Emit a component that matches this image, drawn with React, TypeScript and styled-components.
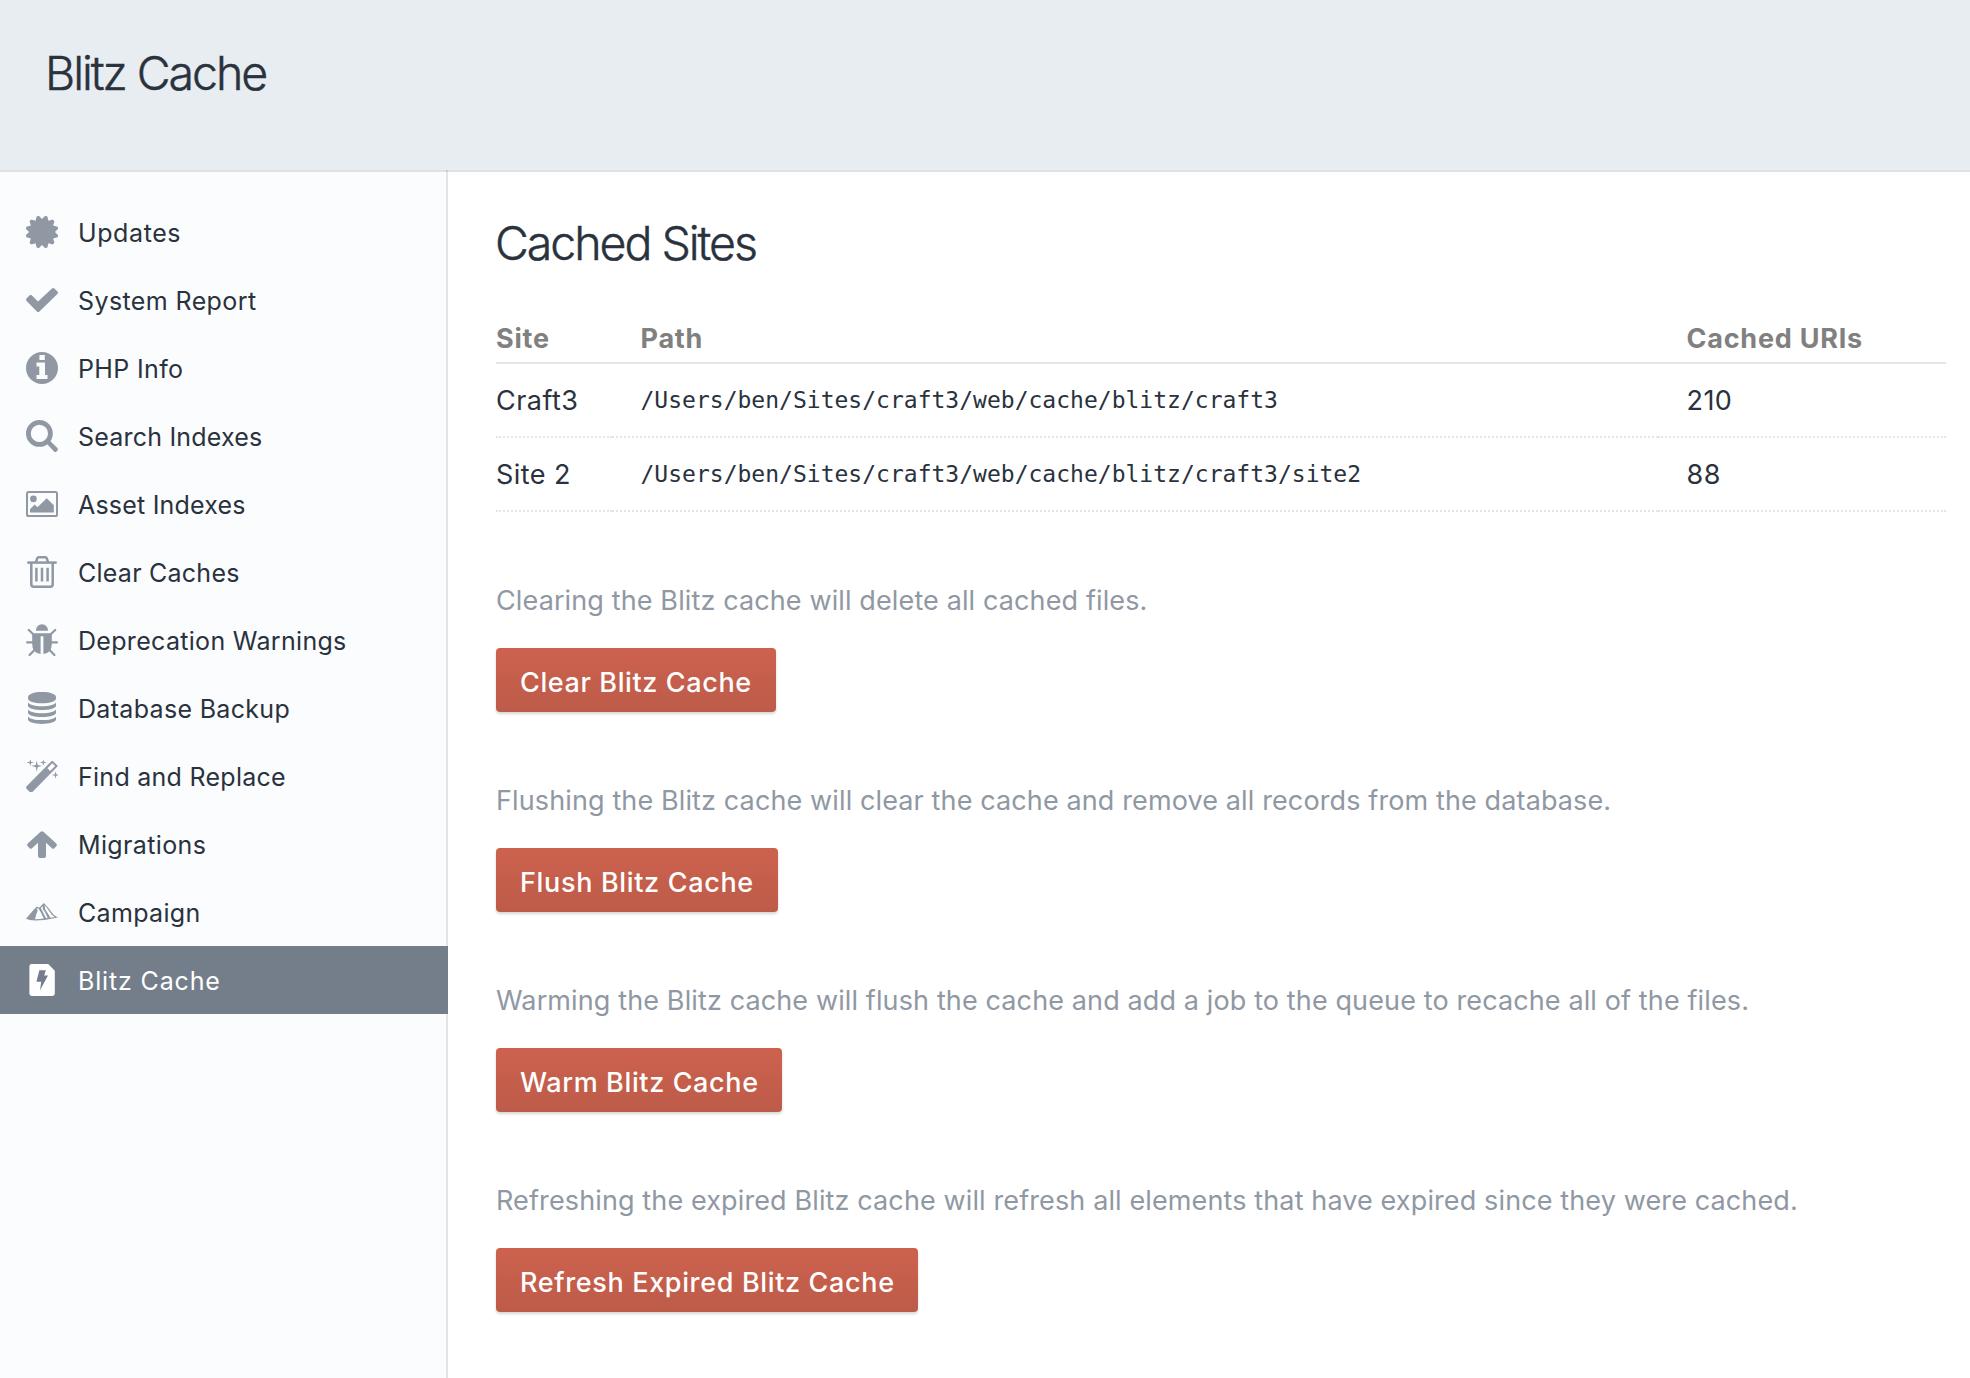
import React from "react";
import styled, { createGlobalStyle, css } from "styled-components";

const ink = "#29323d";
const muted = "#8f98a3";
const hairline = "rgba(0, 0, 20, 0.1)";

const GlobalStyle = createGlobalStyle`
  *, *::before, *::after { box-sizing: border-box; }
  body {
    margin: 0;
    background: #fff;
    color: ${ink};
    font-family: Inter, "Liberation Sans", sans-serif;
    font-size: 27px;
    overflow: hidden;
  }
`;

const Page = styled.div`
  display: flex;
  flex-direction: column;
  height: 1378px;
`;

const Header = styled.header`
  flex: none;
  height: 172px;
  padding: 49px 45px 0;
  background: #e8edf1;
  border-bottom: 2px solid #dfe2e5;
`;

const headingText = css`
  margin: 0;
  font-size: 46.5px;
  font-weight: 300;
  line-height: 48px;
  letter-spacing: -2.05px;
  white-space: nowrap;
  -webkit-text-stroke: 0.45px ${ink};
`;

const PageTitle = styled.h1`
  ${headingText}
`;

const Columns = styled.div`
  flex: 1;
  display: flex;
  align-items: stretch;
`;

const Sidebar = styled.nav`
  flex: none;
  width: 448px;
  margin-top: -2px;
  padding-top: 28px;
  border-right: 2px solid ${hairline};
  background: linear-gradient(#fbfcfe, #fbfcfe) 0 2px no-repeat;
`;

const NavList = styled.ul`
  list-style: none;
  margin: 0;
  padding: 0;
`;

const NavItem = styled.li<{ $active?: boolean }>`
  display: flex;
  align-items: center;
  gap: 20px;
  height: 68px;
  margin-right: -2px;
  padding-left: 26px;
  color: ${(p) => (p.$active ? "#fff" : ink)};
  background: ${(p) => (p.$active ? "#747e8a" : "transparent")};

  svg {
    flex: none;
    width: 32px;
    height: 32px;
    color: ${(p) => (p.$active ? "#fff" : muted)};
  }
`;

const NavLabel = styled.span<{ $tracking: number }>`
  padding-top: 2px;
  font-size: 25px;
  line-height: 32px;
  white-space: nowrap;
  letter-spacing: ${(p) => p.$tracking}px;
`;

const Main = styled.main`
  flex: 1;
  padding: 47px 24px 0 48px;
`;

const SectionTitle = styled.h2`
  ${headingText}
  margin: 0 0 55px -1px;
`;

const Table = styled.table`
  width: 1450px;
  table-layout: fixed;
  border-collapse: separate;
  border-spacing: 0;
`;

const Th = styled.th<{ $width: number }>`
  width: ${(p) => p.$width}px;
  height: 42px;
  padding: 1px 0 7px 28.5px;
  border-bottom: 2px solid #e3e5e8;
  color: #808080;
  font-weight: 700;
  line-height: 32px;
  letter-spacing: 0.76px;
  text-align: left;
  white-space: nowrap;

  &:first-child {
    padding-left: 0;
  }
`;

const Td = styled.td`
  height: 74px;
  padding: 2px 0 0 28.5px;
  border-bottom: 2px dotted #e3e5e8;
  line-height: 32px;
  letter-spacing: 0.46px;
  white-space: nowrap;

  &:first-child {
    padding-left: 0;
  }
`;

const Code = styled.code`
  display: block;
  padding-bottom: 2px;
  font-family: "DejaVu Sans Mono", monospace;
  font-size: 23px;
  line-height: 32px;
  letter-spacing: 0.01px;
`;

const Action = styled.section`
  display: flex;
  flex-direction: column;
  align-items: flex-start;
  gap: 31px;
  margin-top: 73px;

  & + & {
    margin-top: 73px;
  }
`;

const Description = styled.p`
  margin: 0;
  color: ${muted};
  line-height: 32px;
  letter-spacing: 0.12px;
  white-space: nowrap;
`;

const SubmitButton = styled.button<{ $width: number; $tracking: number }>`
  width: ${(p) => p.$width}px;
  height: 64px;
  padding: 6px 0 0 24px;
  border: 0;
  border-radius: 4px;
  background: linear-gradient(#cc624e, #bd5b49);
  box-shadow: 0 2px 3px rgba(0, 0, 20, 0.16);
  color: #fff;
  font: 500 27px / 32px Inter, "Liberation Sans", sans-serif;
  letter-spacing: ${(p) => p.$tracking}px;
  text-align: left;
  white-space: nowrap;
`;

const Icon = ({ children }: { children: React.ReactNode }) => (
  <svg viewBox="0 0 32 32" fill="currentColor" aria-hidden="true">
    {children}
  </svg>
);

const burst = Array.from({ length: 12 }, (_, i) => {
  const at = (deg: number, r: number) => {
    const a = (deg * Math.PI) / 180;
    return `${(16 + r * Math.sin(a)).toFixed(2)},${(16 - r * Math.cos(a)).toFixed(2)}`;
  };
  const c = i * 30 + 15;
  return `${at(c - 4, 16.5)} ${at(c + 4, 16.5)} ${at(c + 15, 12.9)}`;
}).join(" ");

const UpdatesIcon = () => (
  <Icon>
    <polygon points={burst} />
  </Icon>
);

const CheckIcon = () => (
  <Icon>
    <path d="M0.6 14.2 3.8 11.2Q4.8 10.4 5.7 11.3L12 17.6 26 4.6Q27.2 3.5 28.4 4.6L31.4 7.6Q32.6 8.8 31.4 10L13.4 27.5Q12.1 28.6 10.9 27.5L0.6 17Q-0.5 15.6 0.6 14.2Z" />
  </Icon>
);

const InfoIcon = () => (
  <Icon>
    <path
      fillRule="evenodd"
      d="M16 0a16 16 0 1 1 0 32a16 16 0 1 1 0-32ZM13.4 2.9H18.8V8H13.4ZM10.5 10.4H19V23H21.5V27H10.5V23H13.3V14.4H10.5Z"
    />
  </Icon>
);

const SearchIcon = () => (
  <Icon>
    <circle cx="13.4" cy="13.4" r="11" fill="none" stroke="currentColor" strokeWidth="4.8" />
    <path d="M20.8 23.8 24 20.8 31.4 28Q32.4 29.3 31.4 30.6L30.6 31.4Q29.3 32.5 28 31.4Z" />
  </Icon>
);

const ImageIcon = () => (
  <Icon>
    <rect x="1" y="4" width="30" height="24" rx="1.6" fill="none" stroke="currentColor" strokeWidth="2" />
    <circle cx="7.4" cy="10.9" r="3.3" />
    <path d="M4 24.4V21.2L8.7 16.5 11.5 19.3 20.7 10.2 27.8 17.2V24.4Z" />
  </Icon>
);

const TrashIcon = () => (
  <Icon>
    <g fill="none" stroke="currentColor" strokeWidth="2.5">
      <path d="M1.3 6.6H30.7" />
      <path d="M5.3 6.6V28.2Q5.3 30.7 7.8 30.7H24.2Q26.7 30.7 26.7 28.2V6.6" />
      <path d="M10 6.2 11.2 2.4Q11.6 1.3 12.7 1.3H19.3Q20.4 1.3 20.8 2.4L22 6.2" />
      <path d="M10.4 11.8V25.4M16 11.8V25.4M21.6 11.8V25.4" />
    </g>
  </Icon>
);

const BugIcon = () => (
  <Icon>
    <path d="M9.8 6.8Q10.6 0.2 16 0.2T22.2 6.8Z" />
    <path d="M6.2 9.2H25.8V20Q25.8 29.2 17.4 30V12.2H14.6V30Q6.2 29.2 6.2 20Z" />
    <g fill="none" stroke="currentColor" strokeWidth="2.2" strokeLinecap="round">
      <path d="M2.8 6 7 10M29.2 6 25 10M1.1 18.4H7M30.9 18.4H25M3.6 31 8.4 26M28.4 31 23.6 26" />
    </g>
  </Icon>
);

const DatabaseIcon = () => (
  <Icon>
    <path d="M2 5.2C2 2 8 0 16 0S30 2 30 5.2V6.2C30 9.4 24 11.2 16 11.2S2 9.4 2 6.2Z" />
    {[10.6, 17.5, 24.4].map((y) => (
      <path
        key={y}
        d={`M2 ${y}C4 ${y + 2.6} 9 ${y + 3.7} 16 ${y + 3.7}S28 ${y + 2.6} 30 ${y}V${y + 3.4}C29 ${y + 6} 23 ${y + 7.5} 16 ${y + 7.5}S3 ${y + 6} 2 ${y + 3.4}Z`}
      />
    ))}
  </Icon>
);

const sparkle = (x: number, y: number, r: number) => {
  const k = r * 0.19;
  return `M${x} ${y - r}L${x + k} ${y - k} ${x + r} ${y} ${x + k} ${y + k} ${x} ${y + r} ${x - k} ${y + k} ${x - r} ${y} ${x - k} ${y - k}Z`;
};

const WandIcon = () => (
  <Icon>
    <path
      fillRule="evenodd"
      d="M25.4 1.2Q26.2 0.5 27 1.2L31.2 5.3Q31.8 6 31.2 6.8L6.4 32Q5 33.2 3.8 32L0.6 28.8Q-0.5 27.5 0.6 26.2ZM26.3 3.2 21.4 8.2 24.1 10.9 29.2 6.1Z"
    />
    <path d={sparkle(10.7, 6, 5.4) + sparkle(4.3, 2.5, 3.7) + sparkle(17.3, 2.5, 3.4) + sparkle(29.6, 15, 3.8)} />
  </Icon>
);

const ArrowUpIcon = () => (
  <Icon>
    <path d="M14.6 3.8Q16 2.6 17.4 3.8L30.3 15.6Q31.6 17 30.3 18.3L28.4 20.3Q27.2 21.3 26 20.3L20 14.8V28Q20 30 18 30H14Q12 30 12 28V14.8L6 20.3Q4.8 21.3 3.6 20.3L1.7 18.3Q0.4 17 1.7 15.6Z" />
  </Icon>
);

const MountainIcon = () => (
  <Icon>
    <path d="M0 22.8 7.6 13.8 10.6 10.8 13.6 11.4 17.8 7 22 11.6 27.4 18.4 31.8 21.5Q20 24.4 9 24.6 3 24.4 0 22.8Z" />
    <path
      fill="#fbfcfe"
      d="M10.8 12 12.6 12.8 14.6 16 17.8 22.6Q13.6 23.3 9 23.3L10.2 18.6 11.6 15ZM14.8 12 16.6 10.2 17 13.4 19 16 21.6 21.8 20 22.3 17.6 17.4ZM18.6 9 21.4 12.6 25.6 18.4 28.8 21 24.4 21.7 21.6 17 19.2 13.4Z"
    />
  </Icon>
);

const BlitzIcon = () => (
  <Icon>
    <path
      fillRule="evenodd"
      d="M5.8 0H22.2L28.8 6.8V29.6Q28.8 32 26.4 32H5.8Q3.4 32 3.4 29.6V2.4Q3.4 0 5.8 0ZM13.4 6.2 10.4 17.8H15.2L14 26.2 22 11.4H18.2L19.8 6.2Z"
    />
  </Icon>
);

const utilities = [
  { label: "Updates", icon: UpdatesIcon, tracking: 0.6 },
  { label: "System Report", icon: CheckIcon, tracking: 0.4 },
  { label: "PHP Info", icon: InfoIcon, tracking: 0.36 },
  { label: "Search Indexes", icon: SearchIcon, tracking: 0.2 },
  { label: "Asset Indexes", icon: ImageIcon, tracking: 0.2 },
  { label: "Clear Caches", icon: TrashIcon, tracking: 0.24 },
  { label: "Deprecation Warnings", icon: BugIcon, tracking: 0.31 },
  { label: "Database Backup", icon: DatabaseIcon, tracking: 0.32 },
  { label: "Find and Replace", icon: WandIcon, tracking: 0.27 },
  { label: "Migrations", icon: ArrowUpIcon, tracking: 0.36 },
  { label: "Campaign", icon: MountainIcon, tracking: 0.32 },
  { label: "Blitz Cache", icon: BlitzIcon, tracking: 0.85, active: true },
];

const sites = [
  { name: "Craft3", path: "/Users/ben/Sites/craft3/web/cache/blitz/craft3", count: 210 },
  { name: "Site 2", path: "/Users/ben/Sites/craft3/web/cache/blitz/craft3/site2", count: 88 },
];

const actions = [
  {
    text: "Clearing the Blitz cache will delete all cached files.",
    button: "Clear Blitz Cache",
    width: 280,
    tracking: 0.61,
  },
  {
    text: "Flushing the Blitz cache will clear the cache and remove all records from the database.",
    button: "Flush Blitz Cache",
    width: 282,
    tracking: 0.66,
  },
  {
    text: "Warming the Blitz cache will flush the cache and add a job to the queue to recache all of the files.",
    button: "Warm Blitz Cache",
    width: 286,
    tracking: 0.63,
  },
  {
    text: "Refreshing the expired Blitz cache will refresh all elements that have expired since they were cached.",
    button: "Refresh Expired Blitz Cache",
    width: 422,
    tracking: 0.65,
  },
];

export default function App() {
  return (
    <Page>
      <GlobalStyle />
      <Header>
        <PageTitle>Blitz Cache</PageTitle>
      </Header>
      <Columns>
        <Sidebar>
          <NavList>
            {utilities.map(({ label, icon: Glyph, tracking, active }) => (
              <NavItem key={label} $active={active}>
                <Glyph />
                <NavLabel $tracking={tracking}>{label}</NavLabel>
              </NavItem>
            ))}
          </NavList>
        </Sidebar>
        <Main>
          <SectionTitle>Cached Sites</SectionTitle>
          <Table>
            <thead>
              <tr>
                <Th $width={116}>Site</Th>
                <Th $width={1046}>Path</Th>
                <Th $width={288}>Cached URIs</Th>
              </tr>
            </thead>
            <tbody>
              {sites.map((site) => (
                <tr key={site.name}>
                  <Td>{site.name}</Td>
                  <Td>
                    <Code>{site.path}</Code>
                  </Td>
                  <Td>{site.count}</Td>
                </tr>
              ))}
            </tbody>
          </Table>
          {actions.map((action) => (
            <Action key={action.button}>
              <Description>{action.text}</Description>
              <SubmitButton $width={action.width} $tracking={action.tracking}>
                {action.button}
              </SubmitButton>
            </Action>
          ))}
        </Main>
      </Columns>
    </Page>
  );
}
